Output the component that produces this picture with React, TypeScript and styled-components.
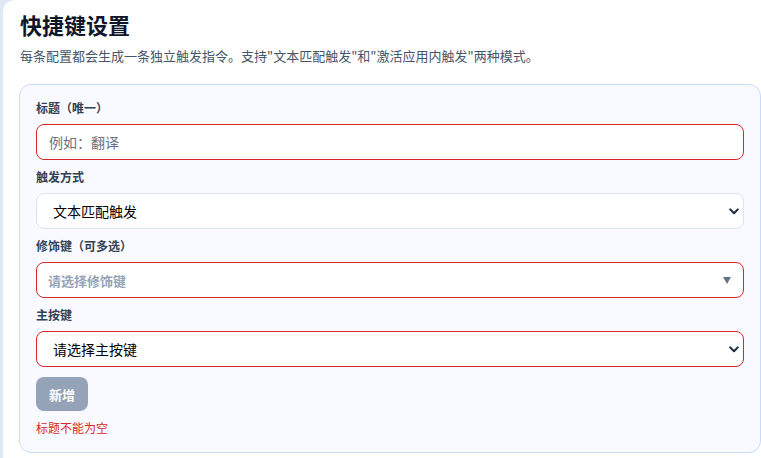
import React from 'react';
import styled, { createGlobalStyle } from 'styled-components';

const GlobalStyle = createGlobalStyle`
    html, body {
        margin: 0;
        padding: 0;
        background: #dfe9f6;
        font-family: "Noto Sans CJK SC", "Noto Sans", "Liberation Sans", sans-serif;
    }
`

export default function App() {
    return (
        <>
            <GlobalStyle />
            <Panel>
                <Title>快捷键设置</Title>
                <Subtitle>每条配置都会生成一条独立触发指令。支持"文本匹配触发"和"激活应用内触发"两种模式。</Subtitle>
                <Card>
                    <Field>
                        <Label>标题（唯一）</Label>
                        <TextInput placeholder="例如：翻译" invalid />
                    </Field>
                    <Field>
                        <Label>触发方式</Label>
                        <SelectWrap>
                            <NativeSelect defaultValue="text">
                                <option value="text">文本匹配触发</option>
                                <option value="app">激活应用内触发</option>
                            </NativeSelect>
                            <Chevron />
                        </SelectWrap>
                    </Field>
                    <Field>
                        <Label>修饰键（可多选）</Label>
                        <MultiSelect invalid>
                            <Placeholder>请选择修饰键</Placeholder>
                            <Caret viewBox="0 0 8 7">
                                <path d="M0 0h8L4 7z" fill="#64748b" />
                            </Caret>
                        </MultiSelect>
                    </Field>
                    <Field>
                        <Label>主按键</Label>
                        <SelectWrap>
                            <NativeSelect defaultValue="" invalid>
                                <option value="">请选择主按键</option>
                            </NativeSelect>
                            <Chevron />
                        </SelectWrap>
                    </Field>
                    <AddButton disabled>新增</AddButton>
                    <ErrorText>标题不能为空</ErrorText>
                </Card>
            </Panel>
        </>
    )
}

function Chevron() {
    return (
        <ChevronIcon viewBox="0 0 10 7">
            <path d="M1.2 1.4L5 5.2l3.8-3.8" fill="none" stroke="#1e293b" strokeWidth="2" strokeLinecap="round" strokeLinejoin="round" />
        </ChevronIcon>
    )
}

const Panel = styled.div`
    margin-left: 3px;
    min-height: 458px;
    box-sizing: border-box;
    background: #ffffff;
    border-top-left-radius: 12px;
    padding: 8px 0 0 16px;
`

const Title = styled.h1`
    margin: 0 0 0 1px;
    font-size: 22px;
    line-height: 32px;
    font-weight: 700;
    color: #0f172a;
`

const Subtitle = styled.p`
    margin: 6px 0 0 1px;
    font-size: 13px;
    line-height: 20px;
    color: #475569;
`

const Card = styled.div`
    margin-top: 18px;
    box-sizing: border-box;
    border: 1px solid #c8dbf6;
    border-radius: 12px;
    background: #f8faff;
    padding: 15px 16px 16px;
    display: flex;
    flex-direction: column;
    align-items: flex-start;
`

const Field = styled.div`
    display: flex;
    flex-direction: column;
    gap: 8px;
    width: 100%;
    margin-bottom: 9px;
`

const Label = styled.label`
    font-size: 12px;
    line-height: 16px;
    font-weight: 700;
    color: #334155;
`

const TextInput = styled.input<{ invalid?: boolean }>`
    box-sizing: border-box;
    width: 100%;
    height: 36px;
    padding: 0 12px;
    border: 1px solid ${p => (p.invalid ? '#dc2626' : '#dbe3ef')};
    border-radius: 8px;
    background: #ffffff;
    font-family: inherit;
    font-size: 14px;
    color: #0f172a;
    outline: none;
    &::placeholder {
        color: #6b7280;
    }
`

const SelectWrap = styled.div`
    position: relative;
    width: 100%;
`

const NativeSelect = styled.select<{ invalid?: boolean }>`
    appearance: none;
    box-sizing: border-box;
    width: 100%;
    height: 36px;
    padding: 0 30px 0 16px;
    border: 1px solid ${p => (p.invalid ? '#dc2626' : '#dbe3ef')};
    border-radius: 8px;
    background: #ffffff;
    font-family: inherit;
    font-size: 14px;
    color: #000000;
    outline: none;
`

const ChevronIcon = styled.svg`
    position: absolute;
    right: 5px;
    top: 15px;
    width: 10px;
    height: 7px;
    pointer-events: none;
`

const MultiSelect = styled.div<{ invalid?: boolean }>`
    box-sizing: border-box;
    width: 100%;
    height: 36px;
    padding: 0 12px 0 11px;
    display: flex;
    align-items: center;
    justify-content: space-between;
    border: 1px solid ${p => (p.invalid ? '#dc2626' : '#dbe3ef')};
    border-radius: 8px;
    background: #ffffff;
`

const Placeholder = styled.span`
    font-size: 13px;
    font-weight: 600;
    color: #94a3b8;
`

const Caret = styled.svg`
    width: 8px;
    height: 7px;
`

const AddButton = styled.button`
    margin-top: 1px;
    height: 34px;
    padding: 0 13px;
    border: none;
    border-radius: 8px;
    background: #94a3b8;
    color: #ffffff;
    font-family: inherit;
    font-size: 13px;
    font-weight: 700;
`

const ErrorText = styled.div`
    margin-top: 9px;
    font-size: 12px;
    line-height: 16px;
    color: #dc2626;
`
